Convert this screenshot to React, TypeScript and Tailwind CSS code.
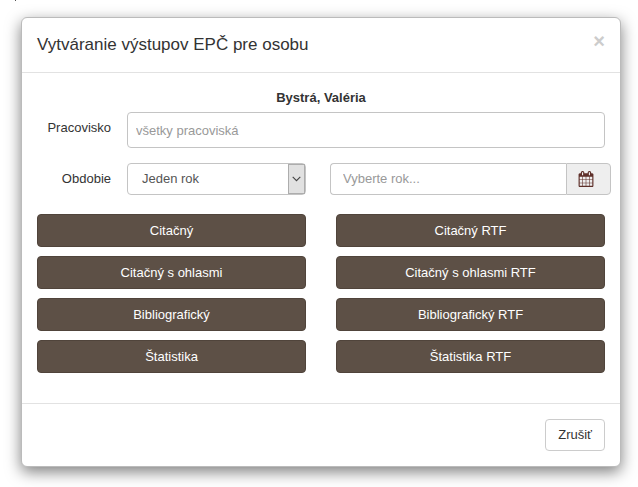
import React, { useState } from 'react';

interface ExportAction {
    id: string;
    label: string;
}

const ACTIONS: ExportAction[] = [
    { id: 'cit', label: 'Citačný' },
    { id: 'cit-rtf', label: 'Citačný RTF' },
    { id: 'ohl', label: 'Citačný s ohlasmi' },
    { id: 'ohl-rtf', label: 'Citačný s ohlasmi RTF' },
    { id: 'bib', label: 'Bibliografický' },
    { id: 'bib-rtf', label: 'Bibliografický RTF' },
    { id: 'stat', label: 'Štatistika' },
    { id: 'stat-rtf', label: 'Štatistika RTF' },
];

const CalendarIcon: React.FC = () => (
    <svg viewBox="0 0 1792 1792" className="size-4 fill-[#5e2f29]" aria-hidden="true">
        <path d="M192 1664h288v-288h-288v288zm352 0h320v-288h-320v288zm-352-352h288v-320h-288v320zm352 0h320v-320h-320v320zm-352-384h288v-288h-288v288zm736 736h320v-288h-320v288zm-384-736h320v-288h-320v288zm768 736h288v-288h-288v288zm-384-352h320v-320h-320v320zm-352-864v-288q0-13-9.5-22.5t-22.5-9.5h-64q-13 0-22.5 9.5t-9.5 22.5v288q0 13 9.5 22.5t22.5 9.5h64q13 0 22.5-9.5t9.5-22.5zm736 864h288v-320h-288v320zm-384-384h320v-288h-320v288zm384 0h288v-288h-288v288zm32-480v-288q0-13-9.5-22.5t-22.5-9.5h-64q-13 0-22.5 9.5t-9.5 22.5v288q0 13 9.5 22.5t22.5 9.5h64q13 0 22.5-9.5t9.5-22.5zm384-64v1280q0 52-38 90t-90 38h-1408q-52 0-90-38t-38-90v-1280q0-52 38-90t90-38h128v-96q0-66 47-113t113-47h64q66 0 113 47t47 113v96h384v-96q0-66 47-113t113-47h64q66 0 113 47t47 113v96h128q52 0 90 38t38 90z" />
    </svg>
);

const App: React.FC = () => {
    const [workplace, setWorkplace] = useState('');
    const [period, setPeriod] = useState('one');
    const [year, setYear] = useState('');

    return (
        <div className="min-h-screen bg-white pl-[21px] pr-[17px] font-['Liberation_Sans',Arial,sans-serif] text-[13px] leading-5 text-[#333]">
            <div className="-ml-2 h-[17px]" aria-hidden="true">
                <div className="ml-[2px] h-px w-px bg-[#555]" />
            </div>
            <div
                role="dialog"
                aria-labelledby="dialog-title"
                className="rounded-md border border-[#bbb] bg-white shadow-[0_5px_15px_rgba(0,0,0,0.5)]"
            >
                <div className="flex items-start justify-between border-b border-[#e2e2e2] px-[15px] py-[15px]">
                    <h4 id="dialog-title" className="text-[17px] leading-6">Vytváranie výstupov EPČ pre osobu</h4>
                    <button type="button" aria-label="Zavrieť" className="text-[20px] leading-4 font-bold text-[#ccc]">×</button>
                </div>

                <div className="px-[15px] pt-[15px] pb-[30px]">
                    <p className="text-center font-bold">Bystrá, Valéria</p>

                    <div className="mt-1 flex items-start">
                        <label htmlFor="workplace" className="w-[90px] shrink-0 pt-1.5 pr-4 text-right">Pracovisko</label>
                        <input
                            id="workplace"
                            type="text"
                            placeholder="všetky pracoviská"
                            value={workplace}
                            onChange={e => setWorkplace(e.target.value)}
                            className="h-9 min-w-0 flex-1 rounded border border-[#c4c4c4] px-2 placeholder:text-[#999]"
                        />
                    </div>

                    <div className="mt-[15px] grid grid-cols-2 gap-[30px]">
                        <div className="flex items-start">
                            <label htmlFor="period" className="w-[90px] shrink-0 pt-1.5 pr-4 text-right">Obdobie</label>
                            <div className="relative min-w-0 flex-1">
                                <select
                                    id="period"
                                    value={period}
                                    onChange={e => setPeriod(e.target.value)}
                                    className="h-8 w-full appearance-none rounded border border-[#c4c4c4] bg-white px-[14px] text-[#555]"
                                >
                                    <option value="one">Jeden rok</option>
                                </select>
                                <span className="pointer-events-none absolute inset-y-px right-px flex w-[17px] items-center justify-center border border-[#adadad] bg-[#e1e1e1]">
                                    <svg viewBox="0 0 9 6" className="h-1.5 w-[9px] fill-none stroke-[#444]" aria-hidden="true">
                                        <path d="M.7.8 4.5 4.6 8.3.8" strokeWidth="1.1" />
                                    </svg>
                                </span>
                            </div>
                        </div>
                        <div className="-mx-1.5 flex h-8">
                            <input
                                type="text"
                                aria-label="Rok"
                                placeholder="Vyberte rok..."
                                value={year}
                                onChange={e => setYear(e.target.value)}
                                className="min-w-0 flex-1 rounded-l border border-r-0 border-[#c4c4c4] px-3 placeholder:text-[#999]"
                            />
                            <button
                                type="button"
                                aria-label="Kalendár"
                                className="flex w-[45px] items-center rounded-r border border-[#c4c4c4] bg-[#eee] pl-[11px]"
                            >
                                <CalendarIcon />
                            </button>
                        </div>
                    </div>

                    <div className="mt-[19px] grid grid-cols-2 gap-x-[30px] gap-y-[9px]">
                        {ACTIONS.map(action => (
                            <button
                                key={action.id}
                                type="button"
                                className="h-[33px] rounded border border-[#50443b] bg-[#5d5046] text-white"
                            >
                                {action.label}
                            </button>
                        ))}
                    </div>
                </div>

                <div className="flex justify-end border-t border-[#e2e2e2] p-[15px]">
                    <button type="button" className="h-8 rounded border border-[#ccc] bg-white px-3">Zrušiť</button>
                </div>
            </div>
        </div>
    );
};

export default App;
